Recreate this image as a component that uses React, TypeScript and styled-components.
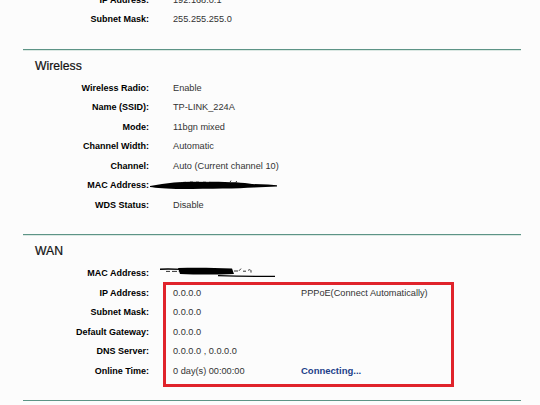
import React from 'react'
import styled, { createGlobalStyle } from 'styled-components'

const GlobalStyle = createGlobalStyle`
  html, body {
    margin: 0;
    padding: 0;
    background: #fcfcfc;
    overflow: hidden;
  }
  body {
    font-family: "Liberation Sans", Arial, sans-serif;
  }
`

const Page = styled.div`
  margin-top: -10px;
  padding: 0 19px 0 23px;
`

const Section = styled.section`
  padding-bottom: 19.5px;
  border-bottom: 1px solid #5d9486;
  box-shadow: 0 1px 0 #dbe8e3;
`

const Heading = styled.h2`
  margin: 8px 0 4.5px 12px;
  font-size: 12.2px;
  line-height: 16px;
  font-weight: normal;
  color: #111;
  -webkit-text-stroke: 0.2px #111;
`

const Row = styled.div`
  display: grid;
  grid-template-columns: 126px 152px 1fr;
  height: 19.5px;
  align-items: center;
  white-space: nowrap;
`

const Label = styled.div`
  text-align: right;
  font-size: 9px;
  font-weight: bold;
  color: #000;
`

const Value = styled.div<{ $inset?: number; $wide?: boolean }>`
  padding-left: ${(p) => (p.$inset ?? 24)}px;
  font-size: 9.2px;
  color: #333;
  grid-column: ${(p) => (p.$wide ? '2 / 4' : 'auto')};
  display: flex;
  align-items: center;
`

const Extra = styled.div<{ $status?: boolean }>`
  font-size: ${(p) => (p.$status ? '9.5px' : '9.2px')};
  font-weight: ${(p) => (p.$status ? 'bold' : 'normal')};
  color: ${(p) => (p.$status ? '#1d3f8a' : '#333')};
`

const Highlighted = styled.div`
  position: relative;

  &::after {
    content: '';
    position: absolute;
    left: 140px;
    top: -1.5px;
    bottom: -6px;
    width: 291px;
    border: 3px solid #e0232b;
    box-sizing: border-box;
    pointer-events: none;
  }
`

const WirelessScribble = () => (
  <svg width="128" height="12" viewBox="0 0 128 12">
    <path
      d="M0 7 C8 5.5 16 4.5 24 3.5 L40 2.5 L62 2.8 C80 3 94 3.5 102 5 L118 5.6 L127 6.2 L127 7.6 L104 8.6 C88 9.6 60 10 32 10 C16 9.8 6 9 0 8 Z"
      fill="#000"
    />
    <path d="M30 2.6 h3 M36 2.4 h4 M43 2.4 h3 M49 2.5 h4 M56 2.6 h3" stroke="#fcfcfc" strokeWidth="0.6" />
    <path d="M80 3.2 l1 -1.6 M86 3.4 l0.6 -1.4" stroke="#000" strokeWidth="0.8" />
  </svg>
)

const WanScribble = () => (
  <svg width="116" height="14" viewBox="0 0 116 14">
    <path d="M0 3.2 C8 2.8 14 3 22 3.4" stroke="#000" strokeWidth="1.4" fill="none" />
    <path d="M6 5.4 h4 M12 5.4 h5 M19 5.6 l2 -2.2" stroke="#333" strokeWidth="1" fill="none" />
    <path
      d="M18 2 C34 1.4 52 1.6 72 2.4 L74 8 C54 8.8 36 8.6 20 8 Z"
      fill="#000"
    />
    <path d="M74 5 h4 M79 4.8 l2 -2.2 M83 5.2 h3 M88 4.6 c1 -1.2 2.2 -1.2 3 0 v2" stroke="#333" strokeWidth="1" fill="none" />
    <path d="M58 9.6 C78 10.2 96 10.4 115 10.4" stroke="#000" strokeWidth="1.3" fill="none" />
  </svg>
)

type Item = { label: string; value: React.ReactNode; extra?: React.ReactNode; inset?: number }

const Rows = ({ items }: { items: Item[] }) => (
  <>
    {items.map((it) => (
      <Row key={it.label}>
        <Label>{it.label}</Label>
        <Value $inset={it.inset} $wide={!it.extra}>
          {it.value}
        </Value>
        {it.extra}
      </Row>
    ))}
  </>
)

const lanItems: Item[] = [
  { label: 'IP Address:', value: '192.168.0.1' },
  { label: 'Subnet Mask:', value: '255.255.255.0' },
]

const wirelessItems: Item[] = [
  { label: 'Wireless Radio:', value: 'Enable' },
  { label: 'Name (SSID):', value: 'TP-LINK_224A' },
  { label: 'Mode:', value: '11bgn mixed' },
  { label: 'Channel Width:', value: 'Automatic' },
  { label: 'Channel:', value: 'Auto (Current channel 10)' },
  { label: 'MAC Address:', value: <WirelessScribble />, inset: 1 },
  { label: 'WDS Status:', value: 'Disable' },
]

const wanMac: Item[] = [{ label: 'MAC Address:', value: <WanScribble />, inset: 11 }]

const wanItems: Item[] = [
  { label: 'IP Address:', value: '0.0.0.0', extra: <Extra>PPPoE(Connect Automatically)</Extra> },
  { label: 'Subnet Mask:', value: '0.0.0.0' },
  { label: 'Default Gateway:', value: '0.0.0.0' },
  { label: 'DNS Server:', value: '0.0.0.0 , 0.0.0.0' },
  { label: 'Online Time:', value: '0 day(s) 00:00:00', extra: <Extra $status>Connecting...</Extra> },
]

export default function App() {
  return (
    <>
      <GlobalStyle />
      <Page>
        <Section>
          <Rows items={lanItems} />
        </Section>
        <Section>
          <Heading>Wireless</Heading>
          <Rows items={wirelessItems} />
        </Section>
        <Section>
          <Heading>WAN</Heading>
          <Rows items={wanMac} />
          <Highlighted>
            <Rows items={wanItems} />
          </Highlighted>
        </Section>
      </Page>
    </>
  )
}
